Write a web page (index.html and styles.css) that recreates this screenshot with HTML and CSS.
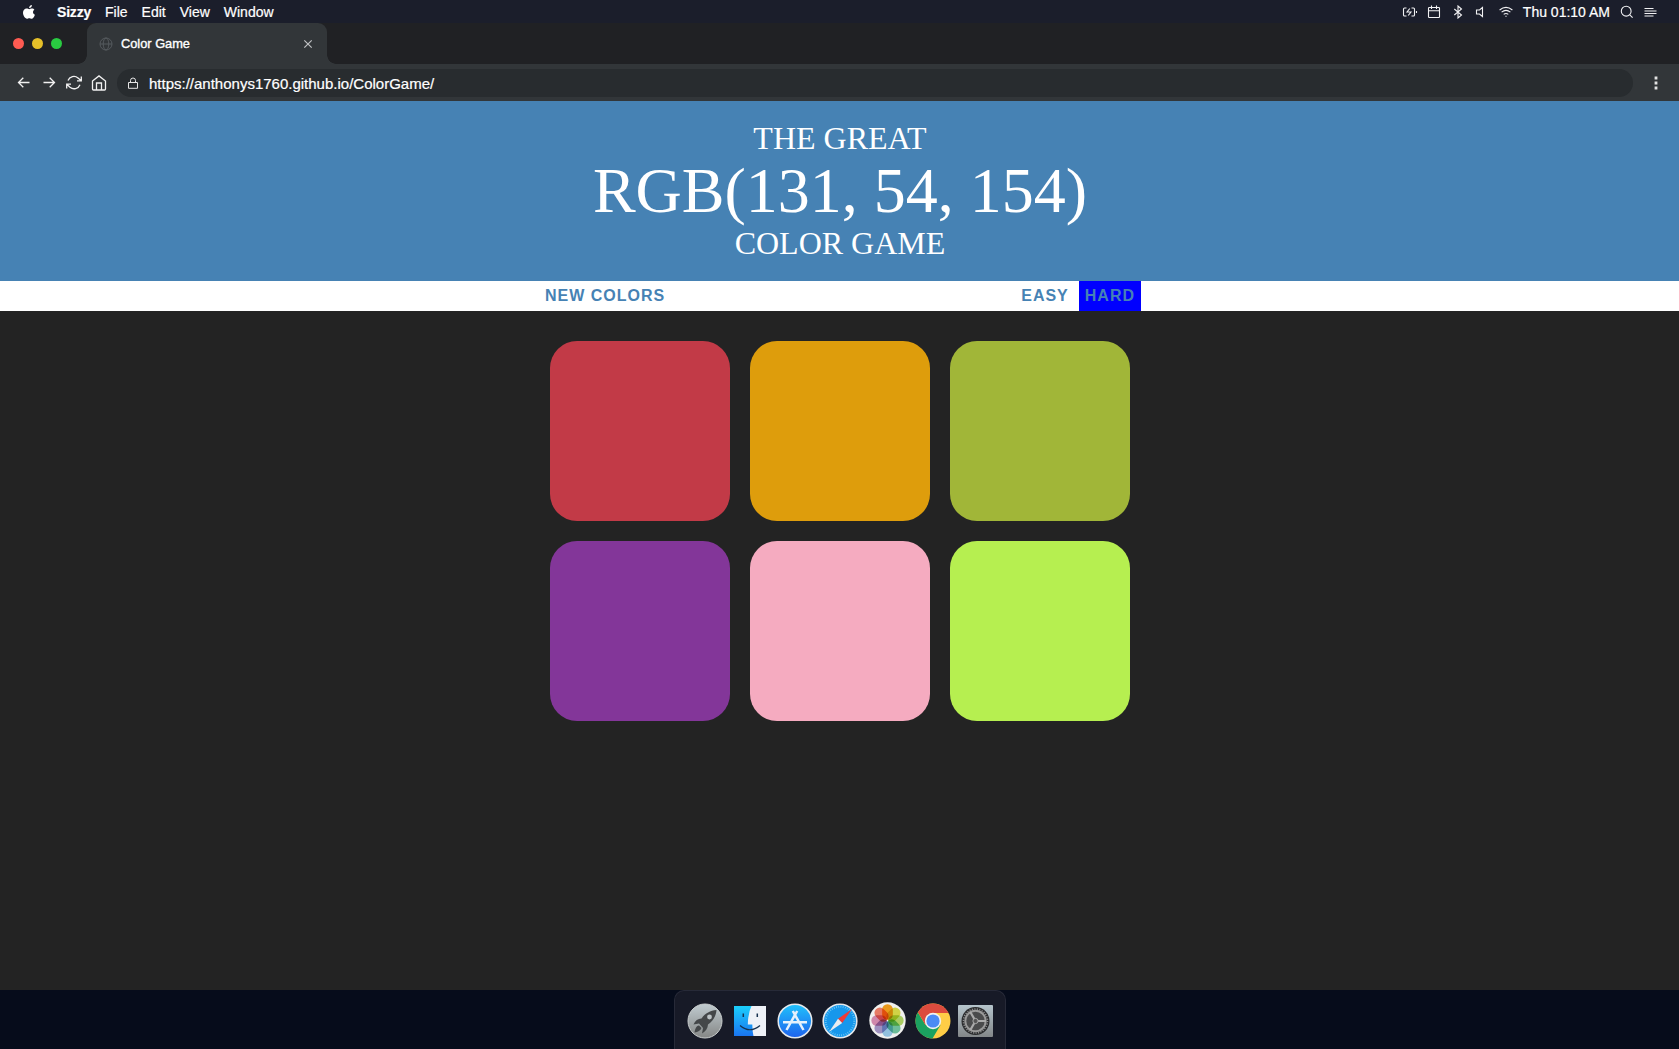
FILE: index.html
```html
<!DOCTYPE html>
<html lang="en">
<head>
<meta charset="utf-8">
<title>Color Game</title>
<link rel="stylesheet" href="styles.css">
</head>
<body>
<div class="desktop">
  <div class="menubar">
    <svg class="apple" width="14" height="14" viewBox="0 0 14 14" fill="#fff"><path d="M9.9 0C10 1.6 8.700 3.100 7.100 3.100 7 1.600 8.400.2 9.900 0zM12.400 4.800C10.300 6.100 10.700 8.800 12.900 9.700 12.300 11.500 11 13.700 9.600 13.700 8.700 13.700 8.300 13.200 7.300 13.200S5.800 13.700 5 13.700C3 13.700 1 10.500 1 7.800 1 5.200 2.700 3.600 4.600 3.600 5.700 3.600 6.500 4.200 7.200 4.200S8.700 3.500 10 3.500C11 3.500 11.900 4 12.400 4.800z"/></svg>
    <nav class="menus"><b>Sizzy</b><span>File</span><span>Edit</span><span>View</span><span>Window</span></nav>
    <div class="status">
      <svg class="i-battery" width="16" height="12" viewBox="0 0 16 12"><path d="M4.500 2H2.500Q1.500 2 1.500 3V9Q1.500 10 2.500 10H4.500M9.500 2H11.500Q12.500 2 12.500 3V9Q12.500 10 11.500 10H9.500M14.500 5V7M7.800 2.500L5 6H9L6.200 9.500"/></svg>
      <svg class="i-cal" width="14" height="14" viewBox="0 0 14 14"><path d="M2.200 2.500H11.800Q12.500 2.500 12.500 3.200V11.800Q12.500 12.500 11.800 12.500H2.200Q1.500 12.500 1.500 11.800V3.200Q1.500 2.500 2.200 2.500zM1.500 5.700H12.500M4.500.5V4M9.500.5V4"/></svg>
      <svg class="i-bt" width="10" height="14" viewBox="0 0 10 14"><path d="M1.300 4L8.500 10 5 13V1L8.500 4 1.300 10"/></svg>
      <svg class="i-vol" width="10" height="12" viewBox="0 0 10 12"><path d="M7.500 1.500L4.500 4H1.500V8H4.500L7.500 10.500z"/></svg>
      <svg class="i-wifi" width="14" height="12" viewBox="0 0 14 12"><path d="M.6 4Q7-1.200 13.400 4M2.600 6.200Q7 2.500 11.400 6.200M4.700 8.400Q7 6.500 9.300 8.400M6.400 10.300H7.600"/></svg>
      <span class="clock">Thu 01:10 AM</span>
      <svg class="i-search" width="14" height="14" viewBox="0 0 14 14"><circle cx="6.200" cy="6.200" r="4.900"/><path d="M9.800 9.800L12.600 12.600"/></svg>
      <svg class="i-list" width="13" height="12" viewBox="0 0 13 12"><path d="M.5 2.500H9.500M.5 5H12.500M.5 7.500H12.500M.5 10H9.500"/></svg>
    </div>
  </div>

  <div class="tabstrip">
    <div class="lights"><i class="close"></i><i class="min"></i><i class="max"></i></div>
    <div class="tab">
      <svg width="14" height="14" viewBox="0 0 14 14" fill="none" stroke="#555a5e"><circle cx="7" cy="7" r="6"/><ellipse cx="7" cy="7" rx="2.800" ry="6"/><path d="M1 7H13"/></svg>
      <span class="tab-title">Color Game</span>
      <svg class="tab-close" width="10" height="10" viewBox="0 0 10 10"><path d="M1.300 1.300L8.700 8.700M8.700 1.300L1.300 8.700"/></svg>
    </div>
  </div>

  <div class="toolbar">
    <div class="nav">
      <svg viewBox="0 0 16 16"><path d="M13.500 7.500H2.500M7.300 2.700L2.500 7.500 7.300 12.300"/></svg>
      <svg viewBox="0 0 16 16"><path d="M2.500 7.500H13.500M8.700 2.700L13.500 7.500 8.700 12.300"/></svg>
      <svg viewBox="0 0 16 16"><path d="M15.300 1.500V5.800H11M.7 13.500V9.200H5M2 5.500A6.300 6.300 0 0 1 12 3L15.300 5.800M.7 9.200L4 12.200A6.300 6.300 0 0 0 14 9.700"/></svg>
      <svg viewBox="0 0 16 16"><path d="M1.500 6L8 .9 14.500 6V14Q14.500 15 13.500 15H2.500Q1.500 15 1.500 14zM5.500 15V8H10.500V15"/></svg>
    </div>
    <div class="url">
      <svg width="12" height="12" viewBox="0 0 12 12"><path d="M1.500 5.500H10.500V11.300H1.500zM3.500 5.500V3.500A2.500 2.500 0 0 1 8.500 3.500V5.500"/></svg>
      <span>https://anthonys1760.github.io/ColorGame/</span>
    </div>
    <svg class="more" width="4" height="14" viewBox="0 0 4 14"><path d="M.6.6h2.800v2.800H.6zM.6 5.600h2.800v2.800H.6zM.6 10.600h2.800v2.800H.6z"/></svg>
  </div>

  <main class="page">
    <h1>The Great<br><span class="rgb">RGB(131, 54, 154)</span><br>Color Game</h1>
    <div class="controls">
      <button>New Colors</button>
      <div class="modes"><button>Easy</button><button class="selected">Hard</button></div>
    </div>
    <div class="squares">
      <div class="square red"></div><div class="square orange"></div><div class="square olive"></div>
      <div class="square purple"></div><div class="square pink"></div><div class="square lime"></div>
    </div>
  </main>

  <footer class="dock-area">
    <div class="dock">
      <svg class="launchpad" width="36" height="36" viewBox="0 0 36 36">
        <defs><linearGradient id="silver" x2="0" y2="1"><stop stop-color="#c0cbd0"/><stop offset="1" stop-color="#858786"/></linearGradient></defs>
        <circle cx="18" cy="18" r="17" fill="url(#silver)" stroke="#c9cdcd"/>
        <path d="M29.500 7C23 7.500 18 10.500 14.500 15.500 11 15.500 8 17.500 6.500 21.500L12 20.500 16 25 15 30.500C18.500 28.500 20.800 25.500 21 21.500 26 18 29 13 29.500 7z" fill="#444749"/><path d="M12 22.500C9 23 8 26 7.500 29.500 11 29 13.500 27.500 14.500 25z" fill="#444749"/><circle cx="22.500" cy="14" r="2.400" fill="#bcc3c6"/>
      </svg>
      <svg class="finder" width="32" height="30" viewBox="0 0 32 30">
        <defs><linearGradient id="face" x2="0" y2="1"><stop stop-color="#1bcffc"/><stop offset="1" stop-color="#1a75f0"/></linearGradient></defs>
        <path d="M0 0H32V30H0z" fill="url(#face)"/><path d="M17.500 0H32V30H19.500Q18.300 25 18.300 18.500H13.800Q14 7 17.500 0z" fill="#eef1f7"/>
        <path d="M9.300 7.500V11M23.300 7.500V11" stroke="#17324f" stroke-width="1.500"/><path d="M6 19.500Q16 28 26 19.500" fill="none" stroke="#17324f" stroke-width="1.200"/>
      </svg>
      <svg class="store" width="36" height="36" viewBox="0 0 36 36">
        <defs><linearGradient id="blue" x2="0" y2="1"><stop stop-color="#20c2fb"/><stop offset="1" stop-color="#1e62ee"/></linearGradient></defs>
        <circle cx="18" cy="18" r="16.800" fill="url(#blue)" stroke="#e5e8eb" stroke-width="1.500"/>
        <path d="M15.800 8L26.500 27M20.200 8L9.500 27M6 19.300H30" stroke="#e6f1fc" stroke-width="2.500" fill="none"/>
      </svg>
      <svg class="safari" width="36" height="36" viewBox="0 0 36 36">
        <circle cx="18" cy="18" r="16.800" fill="#1697ec" stroke="#e5e8eb" stroke-width="1.600"/>
        <circle cx="18" cy="18" r="14.300" fill="none" stroke="#6cc8f4" stroke-width="2" stroke-dasharray=".8 1.450"/>
        <path d="M30 6L16 15.800 20.200 20z" fill="#f03b36"/><path d="M7 29L16 15.800 20.200 20z" fill="#e9edf0"/>
      </svg>
      <svg class="photos" width="37" height="37" viewBox="0 0 36 36">
        <circle cx="18" cy="18" r="17.700" fill="#f0f0ee"/>
        <g class="petals"><rect x="12.800" y="2.300" width="10.400" height="15" rx="5" fill="#f9a31d"/><rect x="12.800" y="2.300" width="10.400" height="15" rx="5" fill="#dde04b" transform="rotate(45 18 18)"/><rect x="12.800" y="2.300" width="10.400" height="15" rx="5" fill="#b4d968" transform="rotate(90 18 18)"/><rect x="12.800" y="2.300" width="10.400" height="15" rx="5" fill="#74c9a4" transform="rotate(135 18 18)"/><rect x="12.800" y="2.300" width="10.400" height="15" rx="5" fill="#9bcdee" transform="rotate(180 18 18)"/><rect x="12.800" y="2.300" width="10.400" height="15" rx="5" fill="#a899cd" transform="rotate(225 18 18)"/><rect x="12.800" y="2.300" width="10.400" height="15" rx="5" fill="#dd91b7" transform="rotate(270 18 18)"/><rect x="12.800" y="2.300" width="10.400" height="15" rx="5" fill="#f5836c" transform="rotate(315 18 18)"/></g>
      </svg>
      <svg class="chrome" width="36" height="36" viewBox="0 0 36 36">
        <circle cx="18" cy="18" r="17.500" fill="#ffcd46"/>
        <path d="M18 18L10.500 22 2.800 9.300A17.500 17.500 0 0 0 17.500 35.500L25.500 22z" fill="#1ba260"/>
        <path d="M18 10H33.500A17.500 17.500 0 0 0 2.900 9.200L10.500 22 18 18z" fill="#dc4b3e"/>
        <circle cx="18" cy="18" r="8.200" fill="#f1f1f1"/><circle cx="18" cy="18" r="6.600" fill="#4a8bf5"/>
      </svg>
      <svg class="settings" width="35" height="32" viewBox="0 0 35 32">
        <defs><linearGradient id="plate" x2="0" y2="1"><stop stop-color="#b5c4cc"/><stop offset="1" stop-color="#838789"/></linearGradient></defs>
        <rect width="35" height="32" rx="1" fill="url(#plate)"/><circle cx="17.500" cy="16" r="14" fill="#2b2c2e"/>
        <circle cx="17.500" cy="16" r="12" fill="none" stroke="#8b8c8d" stroke-width="1.600" stroke-dasharray="1.200 1.300"/><circle cx="17.500" cy="16" r="10.200" fill="#4a4b4c" stroke="#9a9a9a" stroke-width="2"/>
        <path d="M17.500 16H28M17.500 16L12.300 7M17.500 16L12.300 25" stroke="#aaa" stroke-width="2.200"/><circle cx="17.500" cy="16" r="2.600" fill="#555" stroke="#aaa"/>
      </svg>
    </div>
  </footer>
</div>
</body>
</html>
```
FILE: styles.css
```css
* { box-sizing: border-box; }
body { margin: 0; font-family: "Liberation Sans", Arial, sans-serif; }
svg { display: block; flex: none; }
.desktop { height: 1049px; display: flex; flex-direction: column; background: #060c1b; overflow: hidden; }

.menubar { height: 23px; display: flex; align-items: center; background: #1b1e2b; color: #fff; font-size: 14px; line-height: 23px; padding: 1px 22px 0 22px; }
.menus { display: flex; gap: 14px; margin-left: 21px; -webkit-text-stroke: .2px #fff; }
.menus b { letter-spacing: -.2px; }
.status { margin-left: auto; display: flex; align-items: center; }
.status svg { fill: none; stroke: #f1f1f3; stroke-width: 1.1; }
.i-cal { margin-left: 9px; }
.i-bt { margin-left: 12px; }
.i-vol { margin-left: 12px; }
.i-wifi { margin-left: 14px; }
.clock { margin-left: 10px; -webkit-text-stroke: .2px #fff; }
.i-search { margin-left: 10px; }
.i-list { margin-left: 10px; }

.tabstrip { height: 41px; display: flex; background: #202124; }
.lights { width: 87px; padding: 15px 0 0 13px; display: flex; gap: 8px; }
.lights i { width: 11px; height: 11px; border-radius: 50%; }
.close { background: #fe5b52; }
.min { background: #e6c029; }
.max { background: #29cb41; }
.tab { position: relative; width: 240px; display: flex; align-items: center; padding: 0 14px 0 12px; background: #323639; border-radius: 9px 9px 0 0; color: #fff; font-size: 12.8px; }
.tab::before, .tab::after { content: ""; position: absolute; bottom: 0; width: 9px; height: 9px; }
.tab::before { right: 100%; background: radial-gradient(circle at 0 0, transparent 8.5px, #323639 9px); }
.tab::after { left: 100%; background: radial-gradient(circle at 100% 0, transparent 8.5px, #323639 9px); }
.tab-title { flex: 1; margin-left: 8px; -webkit-text-stroke: .35px #fff; }
.tab-close { fill: none; stroke: #bfc1c3; stroke-width: 1.2; }

.toolbar { height: 37px; display: flex; align-items: center; background: #323639; padding: 0 21px 0 16px; }
.nav { display: flex; gap: 9px; }
.nav svg { width: 16px; height: 16px; fill: none; stroke: #f1f1f1; stroke-width: 1.3; }
.url { flex: 1; height: 28px; margin: 1px 21px 0 10px; display: flex; align-items: center; padding-left: 10px; border-radius: 14px; background: #282c2f; color: #fff; font-size: 15px; }
.url svg { fill: none; stroke: #e5e5e5; }
.url span { margin: 1px 0 0 10px; -webkit-text-stroke: .2px #fff; }
.more { fill: #e3e3e3; }

.page { height: 889px; background: #232323; }
h1 { margin: 0; height: 180px; padding: 20px 0 20px 1px; background: #4682b4; color: #fff; text-align: center; text-transform: uppercase; font: 400 32px/1.09 "Liberation Serif", "Times New Roman", serif; }
.rgb { font-size: 64px; }
.controls { height: 30px; display: flex; justify-content: space-between; padding: 0 538px 0 539px; background: #fff; }
.modes { display: flex; gap: 4px; }
button { height: 30px; border: 0; background: none; padding: 0 6px 1px; color: #4682b4; font: 700 16px "Liberation Sans", Arial, sans-serif; letter-spacing: 1px; text-transform: uppercase; }
button.selected { background: #00f; }
.squares { display: grid; grid-template-columns: repeat(3, 180px); gap: 20px; padding: 30px 0 0 550px; }
.square { height: 180px; border-radius: 15%; }
.red { background: #c23a47; }
.orange { background: #de9d0c; }
.olive { background: #a1b638; }
.purple { background: #833699; }
.pink { background: #f5abc0; }
.lime { background: #b6ef50; }

.dock-area { flex: 1; display: flex; justify-content: center; }
.dock { width: 332px; height: 59px; display: flex; align-items: center; padding: 1px 0 0 12px; background: #171a27; border: 1px solid #272a38; border-bottom: 0; border-radius: 10px 10px 0 0; }
.finder { margin-left: 11px; }
.store { margin-left: 11px; }
.safari { margin-left: 9px; }
.photos { margin-left: 11px; }
.chrome { margin-left: 9px; }
.settings { margin-left: 7px; }
.photos { isolation: isolate; }
.petals rect { mix-blend-mode: multiply; }
```
